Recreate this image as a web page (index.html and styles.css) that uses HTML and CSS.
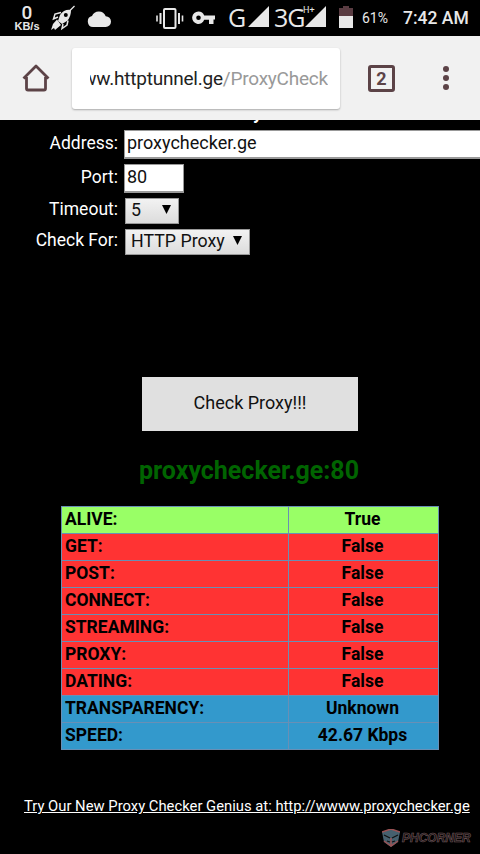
FILE: index.html
```html
<!DOCTYPE html>
<html lang="en">
<head>
  <meta charset="UTF-8" />
  <meta name="viewport" content="width=device-width, initial-scale=1.0" />
  <title>Proxy Checker</title>
  <link rel="stylesheet" href="styles.css">
</head>
<body>

  <header class="status-bar">
    <div class="net-speed"><b>0</b><span>KB/s</span></div>
    <svg class="rocket" width="26" height="26" viewBox="0 0 26 26">
      <path d="M24.5 1 L20 5.5" stroke="#e8e8e8" stroke-width="1.3"/>
      <path d="M21 5 Q14 4 10 10 L8 16 L12 19 L17 16 Q21 12 21 5 Z" fill="#e8e8e8"/>
      <circle cx="15.8" cy="10" r="2" fill="#000"/>
      <path d="M11 7.5 L5 9 L3.5 14 L8 12 M18 15.5 L17 20 L12 23.5 L13 19" fill="none" stroke="#e8e8e8" stroke-width="1.5"/>
      <path d="M7 14.5 L3 19 L1 25 L4 23 L5 25 L11 20 Z" fill="#e8e8e8"/>
    </svg>
    <svg class="cloud" width="24" height="17" viewBox="0 0 24 17">
      <path d="M6 17 A5.6 5.6 0 0 1 5 6 A7.4 7.4 0 0 1 18.7 6.2 A5.4 5.4 0 0 1 18.5 17 Z" fill="#e8e8e8"/>
    </svg>
    <svg class="vibrate" width="28" height="21" viewBox="0 0 28 21" fill="none" stroke="#e8e8e8">
      <rect x="8" y="1" width="11.5" height="19" rx="1" stroke-width="2"/>
      <path d="M4.5 5 V16 M23 5 V16" stroke-width="2"/>
      <path d="M1 7.5 V13.5 M26.5 7.5 V13.5" stroke-width="1.6"/>
    </svg>
    <svg class="key" width="24" height="14" viewBox="0 0 24 14">
      <path fill="#e8e8e8" fill-rule="evenodd" d="M6.5 .5 A6.2 6.2 0 0 1 12.2 4.5 H23 V8.5 H21.5 V13 H17 V8.8 H12.2 A6.2 6.2 0 1 1 6.5 .5 Z M6.5 4.5 A2.3 2.3 0 1 0 6.5 9.1 A2.3 2.3 0 1 0 6.5 4.5 Z"/>
    </svg>
    <span class="carrier carrier-g">G</span>
    <svg class="signal" width="21" height="21" viewBox="0 0 21 21"><path d="M0 21 L21 0 V21 Z" fill="#e8e8e8"/></svg>
    <span class="carrier carrier-3g">3G</span>
    <div class="signal-data">
      <svg class="signal" width="21" height="21" viewBox="0 0 21 21"><path d="M0 21 L21 0 V21 Z" fill="#e8e8e8"/></svg>
      <small>H+</small>
    </div>
    <svg class="battery" width="14" height="22" viewBox="0 0 14 22">
      <path d="M4 0 H10 V2 H14 V10 H0 V2 H4 Z" fill="#5a3c42"/>
      <path d="M0 10 H14 V22 H0 Z" fill="#e8e8e8"/>
    </svg>
    <span class="percent">61%</span>
    <span class="clock">7:42 AM</span>
  </header>

  <nav class="toolbar">
    <svg class="home" width="28" height="28" viewBox="0 0 28 28" fill="none" stroke="#5c4347" stroke-width="2.8" stroke-linejoin="round">
      <path d="M1.5 14.5 L14 2 L26.5 14.5 M4.5 13 V24.5 Q4.5 26 6 26 H22 Q23.5 26 23.5 24.5 V13"/>
    </svg>
    <div class="url"><div class="url-text">ww.httptunnel.ge<span>/ProxyCheck</span></div></div>
    <div class="tabs">2</div>
    <div class="menu"><i></i><i></i><i></i></div>
  </nav>

  <main class="page">
    <div class="title">y</div>

    <form class="form">
      <label>Address:</label>
      <div class="input address">proxychecker.ge</div>
      <label>Port:</label>
      <div class="input port">80</div>
      <label class="up">Timeout:</label>
      <div class="select timeout">5<svg width="9" height="9" viewBox="0 0 9 9"><path d="M0 0 H9 L4.5 9 Z"/></svg></div>
      <label class="up">Check For:</label>
      <div class="select check-for">HTTP Proxy<svg width="9" height="9" viewBox="0 0 9 9"><path d="M0 0 H9 L4.5 9 Z"/></svg></div>
    </form>

    <button class="check">Check Proxy!!!</button>
    <h2>proxychecker.ge:80</h2>

    <table class="results">
      <tr class="ok"><td>ALIVE:</td><td>True</td></tr>
      <tr class="fail"><td>GET:</td><td>False</td></tr>
      <tr class="fail"><td>POST:</td><td>False</td></tr>
      <tr class="fail"><td>CONNECT:</td><td>False</td></tr>
      <tr class="fail"><td>STREAMING:</td><td>False</td></tr>
      <tr class="fail"><td>PROXY:</td><td>False</td></tr>
      <tr class="fail"><td>DATING:</td><td>False</td></tr>
      <tr class="info"><td>TRANSPARENCY:</td><td>Unknown</td></tr>
      <tr class="info"><td>SPEED:</td><td>42.67 Kbps</td></tr>
    </table>

    <a class="promo" href="#">Try Our New Proxy Checker Genius at: http://wwww.proxychecker.ge</a>

    <div class="watermark">
      <svg width="18" height="18" viewBox="0 0 18 18">
        <path d="M0 3 L9 0 L18 3 L16 13 L9 18 L2 13 Z" fill="#46606e"/>
        <path d="M0 3 L9 0 L18 3 M2 12 L9 17 L16 12 M9 9 V17" fill="none" stroke="#9a5254" stroke-width="1.5"/>
        <path d="M2 6 L8 9 M16 6 L10 9 M5 12 L8 13 M13 12 L10 13" stroke="#111" stroke-width="1.3"/>
      </svg>
      <span>PHCORNER</span>
    </div>
  </main>

</body>
</html>
```

FILE: styles.css
```css
* {
  margin: 0;
  padding: 0;
  box-sizing: border-box;
}
body {
  width: 480px;
  height: 854px;
  overflow: hidden;
  background: #000;
  color: #fff;
  font-family: Roboto, sans-serif;
  font-size: 18px;
}
svg {
  display: block;
  flex: none;
}

/* status bar */
.status-bar {
  height: 36px;
  display: flex;
  align-items: center;
  color: #e8e8e8;
  white-space: nowrap;
}
.net-speed {
  width: 28px;
  margin-left: 13px;
  display: flex;
  flex-direction: column;
  align-items: center;
}
.net-speed b {
  font-size: 19px;
  font-weight: 500;
  line-height: 17px;
}
.net-speed span {
  font: bold 11px/11px "Liberation Sans", sans-serif;
}
.rocket {
  margin-left: 9px;
}
.cloud {
  margin-left: 11px;
}
.vibrate {
  margin-left: 45px;
}
.key {
  margin-left: 8px;
}
.carrier {
  margin-top: -2px;
  font-family: "Open Sans", sans-serif;
  font-size: 25px;
  line-height: 36px;
}
.carrier-g {
  width: 20px;
  margin-left: 12px;
}
.carrier-3g {
  width: 31px;
  margin-left: 5px;
  letter-spacing: -1px;
}
.signal {
  margin-top: -3px;
}
.signal-data {
  position: relative;
}
.signal-data small {
  position: absolute;
  left: -2px;
  top: -4px;
  font-size: 9px;
  line-height: 10px;
}
.battery {
  margin: -2px 0 0 13px;
}
.percent {
  width: 41px;
  margin-left: 9px;
  font-size: 14px;
}
.clock {
  font-size: 17.5px;
  font-weight: 500;
}

/* browser toolbar */
.toolbar {
  height: 84px;
  display: flex;
  align-items: center;
  background: #f1f1f1;
}
.home {
  margin-left: 22px;
}
.url {
  width: 268px;
  height: 61px;
  margin-left: 22px;
  padding: 0 12px 0 18px;
  display: flex;
  align-items: center;
  background: #fff;
  border-radius: 3px;
  box-shadow: 0 1px 2px rgba(0, 0, 0, 0.3);
}
.url-text {
  width: 238px;
  display: flex;
  justify-content: flex-end;
  overflow: hidden;
  color: #222;
  font-size: 19px;
  letter-spacing: -0.22px;
  white-space: nowrap;
}
.url-text span {
  color: #999;
}
.tabs {
  width: 27px;
  height: 27px;
  margin-left: 28px;
  border: 3px solid #5c4347;
  border-radius: 3px;
  color: #5c4347;
  font-size: 18px;
  font-weight: 700;
  line-height: 21px;
  text-align: center;
}
.menu {
  margin-left: 48px;
  display: flex;
  flex-direction: column;
  gap: 3px;
}
.menu i {
  width: 6px;
  height: 6px;
  border-radius: 50%;
  background: #5c4347;
}

/* page */
.page {
  position: relative;
  height: 734px;
  overflow: hidden;
}
.title {
  height: 10px;
  margin: -7px 0 7px;
  padding-left: 253px;
  font-size: 18px;
  font-weight: 700;
  line-height: 0;
}
.form {
  display: grid;
  grid-template-columns: 118px 362px;
  column-gap: 6px;
  grid-template-rows: 29px 29px 26px 26px;
  row-gap: 5px;
}
.form label {
  font-size: 17.5px;
  line-height: 26px;
  text-align: right;
}
.form .up {
  line-height: 22px;
}
.input {
  padding-left: 2px;
  background: #fff;
  border: 1px solid #999;
  border-bottom-width: 2px;
  color: #111;
  line-height: 24px;
}
.port {
  width: 60px;
}
.select {
  height: 26px;
  padding: 0 7px 3px 5px;
  margin-left: 1px;
  display: flex;
  align-items: center;
  justify-content: space-between;
  background: linear-gradient(#f2f2f2, #dcdcdc);
  border: 1px solid #999;
  color: #111;
  font-size: 17.8px;
  line-height: 21px;
}
.timeout {
  width: 54px;
}
.check-for {
  width: 125px;
}
.check {
  display: block;
  width: 216px;
  height: 54px;
  margin: 122px 0 0 142px;
  padding-bottom: 4px;
  background: #e0e0e0;
  border: none;
  color: #111;
  font: 18px Roboto, sans-serif;
}
h2 {
  margin: 25px 0 0 18px;
  color: #006400;
  font-size: 25px;
  font-weight: 700;
  line-height: 30px;
  text-align: center;
}
.results {
  width: 378px;
  margin: 20px 0 0 61px;
  border-collapse: collapse;
  table-layout: fixed;
  color: #000;
  font-size: 17.5px;
  font-weight: 700;
}
.results td {
  height: 27px;
  padding: 0 3px 2px;
  border: 1px solid #698fb5;
  line-height: 24px;
}
.results td:first-child {
  width: 227px;
}
.results td:last-child {
  padding-right: 5px;
  text-align: center;
}
.ok {
  background: #9f6;
}
.fail {
  background: #f33;
}
.info {
  background: #39c;
}
.promo {
  display: block;
  margin: 46px 0 0 24px;
  color: #fff;
  font-size: 14.8px;
  line-height: 20px;
  white-space: nowrap;
}
.watermark {
  position: absolute;
  left: 382px;
  bottom: 7px;
  display: flex;
  align-items: center;
  gap: 2px;
  font: italic bold 12px "Liberation Sans", sans-serif;
  color: #101010;
  -webkit-text-stroke: 0.6px #76585c;
}
```
